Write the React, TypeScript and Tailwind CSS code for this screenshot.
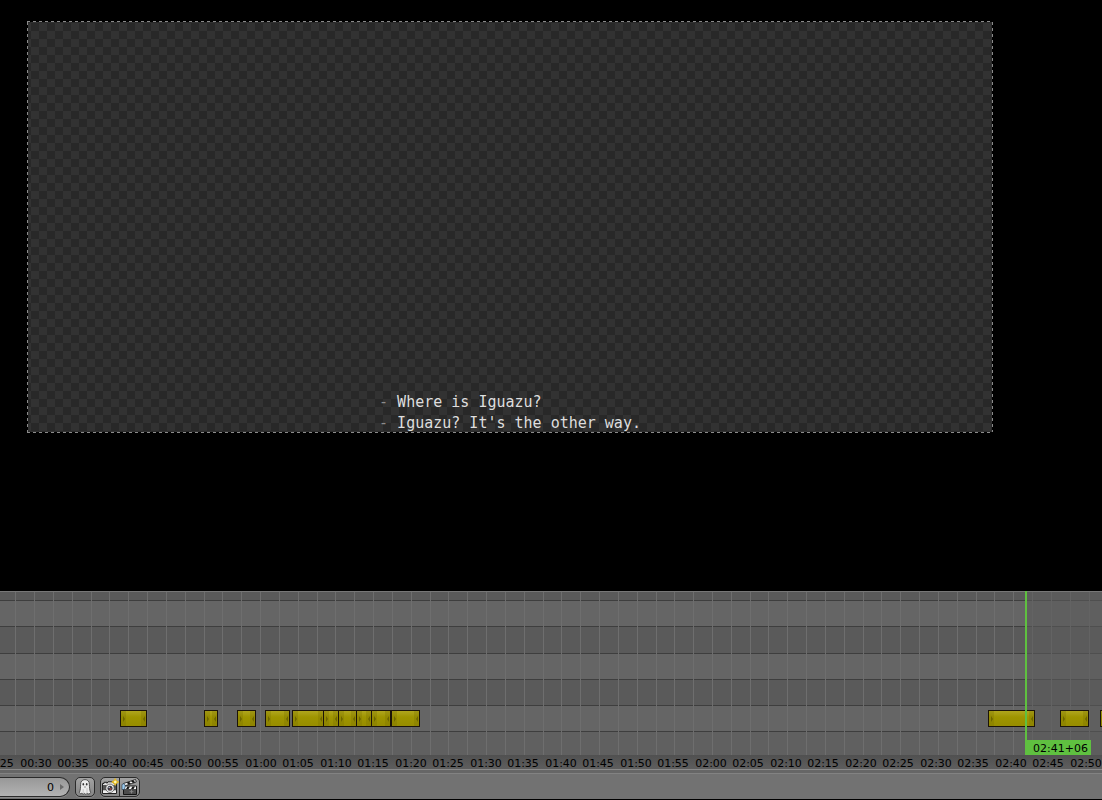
const LABEL_ORIGIN = 36;
const LABEL_STEP = 37.5;
const GRID_ORIGIN = 15.8;
const GRID_STEP = 18.83;

const LABELS = Array.from({ length: 30 }, (_, i) => {
  const seconds = 25 + i * 5;
  const mm = String(Math.floor(seconds / 60)).padStart(2, "0");
  const ss = String(seconds % 60).padStart(2, "0");
  return { text: `${mm}:${ss}`, x: Math.floor(LABEL_ORIGIN + (i - 1) * LABEL_STEP) };
});

const GRID_LINES = Array.from({ length: 100 }, (_, i) => Math.floor(GRID_ORIGIN + i * GRID_STEP));

const STRIPS = [
  { start: 120, end: 147 },
  { start: 204, end: 218 },
  { start: 237, end: 256 },
  { start: 265, end: 290 },
  { start: 292, end: 324 },
  { start: 323, end: 339 },
  { start: 338, end: 357 },
  { start: 356, end: 372 },
  { start: 371, end: 391 },
  { start: 391, end: 420 },
  { start: 988, end: 1035 },
  { start: 1060, end: 1089 },
  { start: 1100, end: 1130 },
];

function Strip({ start, end }: { start: number; end: number }) {
  return (
    <div
      className="absolute top-[119px] flex h-[17px] items-stretch justify-between border border-[#1c1408] bg-linear-to-b from-[#b0a61c] via-[#9f9500] via-40% to-[#978d00]"
      style={{ left: start, width: end - start }}
    >
      <span className="flex w-[5px] items-center justify-center bg-[#7a7100]/30">
        <svg className="h-[6px] w-[2px]" viewBox="0 0 2 6">
          <path d="M0 0 L2 3 L0 6 Z" fill="#6e6600" />
        </svg>
      </span>
      <span className="flex w-[5px] items-center justify-center bg-[#7a7100]/30">
        <svg className="h-[6px] w-[2px]" viewBox="0 0 2 6">
          <path d="M2 0 L0 3 L2 6 Z" fill="#6e6600" />
        </svg>
      </span>
    </div>
  );
}

function Preview() {
  return (
    <section aria-label="Preview" className="flex-1 bg-black pt-[21px] pr-[109px] pb-[158px] pl-[27px]">
      <div className="h-[412px] bg-[repeating-linear-gradient(90deg,#8a8a8a_0_3px,#000_3px_6px),repeating-linear-gradient(90deg,#8a8a8a_0_3px,#000_3px_6px),repeating-linear-gradient(0deg,#8a8a8a_0_3px,#000_3px_6px),repeating-linear-gradient(0deg,#8a8a8a_0_3px,#000_3px_6px)] bg-[size:100%_1px,100%_1px,1px_100%,1px_100%] bg-[position:top,bottom,left,right] bg-no-repeat p-px">
        <div className="flex h-full items-end justify-center bg-[repeating-conic-gradient(#323232_0_25%,#282828_0_50%)] bg-[size:16px_16px] bg-[position:3px_1px]">
          <p className="-mb-[2px] font-['DejaVu_Sans_Mono',monospace] text-[15px] leading-[21px] font-extralight whitespace-pre text-[#dedede]">
            <span className="text-[#8c8c8c]">-</span> Where is Iguazu?{"\n"}
            <span className="text-[#8c8c8c]">-</span> Iguazu? It's the other way.
          </p>
        </div>
      </div>
    </section>
  );
}

function Timeline() {
  return (
    <section aria-label="Sequence timeline" className="relative overflow-hidden">
      <div className="border-t border-[#777777]">
        <div className="h-[9px] border-b border-[#3e3e3e] bg-[#5a5a5a]" />
        <div className="h-[26px] border-b border-[#3e3e3e] bg-[#656565]" />
        <div className="h-[27px] border-b border-[#3e3e3e] bg-[#5a5a5a]" />
        <div className="h-[26px] border-b border-[#3e3e3e] bg-[#656565]" />
        <div className="h-[26px] border-b border-[#3e3e3e] bg-[#5a5a5a]" />
        <div className="h-[26px] border-b border-[#3e3e3e] bg-[#656565]" />
        <div className="h-[23px] bg-[#606060]" />
      </div>
      <div className="absolute inset-x-0 top-px bottom-[14px]">
        {GRID_LINES.map((x) => (
          <span key={x} className="absolute inset-y-0 w-px bg-[#6e6e6e]" style={{ left: x }} />
        ))}
      </div>
      <div className="absolute top-px right-0 bottom-[14px] left-[1027px] bg-[#5b5b5b]/60" />
      {STRIPS.map((s) => (
        <Strip key={s.start} start={s.start} end={s.end} />
      ))}
      <div className="absolute top-0 bottom-[14px] left-[1025px] flex items-end border-l-2 border-[#5fc040]">
        <span className="h-[15px] bg-[#5fc040] pr-[3px] pl-[6px] text-[11px] leading-[17px] text-black">02:41+06</span>
      </div>
      <div className="relative h-[14px] bg-linear-to-b from-[#505050] to-[#5e5e5e]">
        {LABELS.map((l) => (
          <span
            key={l.text}
            className="absolute top-0 -translate-x-1/2 text-[11px] leading-[17px] text-black"
            style={{ left: l.x }}
          >
            {l.text}
          </span>
        ))}
      </div>
    </section>
  );
}

function GhostIcon() {
  return (
    <svg className="h-4 w-4" viewBox="0 0 16 16" aria-hidden="true">
      <path
        d="M8 0.6 C5 0.6 3.6 2.6 3.6 5.5 C3.6 8.5 3.4 11 2.4 13.5 C3 15 4 15 4.8 14 C5.4 15.5 6.6 15.5 7.4 14.4 C8.3 15.6 9.4 15.5 10 14.4 C11 15.4 12.8 15.2 13.6 13.6 C12.6 11 12.4 8.5 12.4 5.5 C12.4 2.6 11 0.6 8 0.6 Z"
        fill="#ececec"
        stroke="#444"
        strokeWidth="0.9"
      />
      <path d="M10 9 V14 M6.2 10 V14" stroke="#c2c2c2" strokeWidth="0.9" />
      <ellipse cx="6.3" cy="5.3" rx="0.8" ry="1.2" fill="#333" />
      <ellipse cx="9.7" cy="5.3" rx="0.8" ry="1.2" fill="#333" />
      <path d="M7 8 H9" stroke="#777" strokeWidth="0.8" />
    </svg>
  );
}

function CameraIcon() {
  return (
    <svg className="h-[18px] w-[18px] shrink-0" viewBox="0 0 18 18" aria-hidden="true">
      <path d="M1.5 5.5 H3 V4.3 H6 V5.3 L7 3.8 H12 L13 5.5 H15.5 V15.5 H1.5 Z" fill="#dedede" stroke="#222" />
      <path d="M2 7 H15 V12.5 H2 Z" fill="#555" />
      <path d="M2 12.5 H15 V15 H2 Z" fill="#efefef" />
      <circle cx="9" cy="10.3" r="4.2" fill="#ececec" stroke="#333" strokeWidth="0.6" />
      <circle cx="9" cy="10.3" r="2.5" fill="#3a3a44" />
      <circle cx="9.6" cy="11" r="1.1" fill="#a04a40" />
      <circle cx="8.2" cy="9.4" r="0.7" fill="#c5d0e0" />
      <path d="M14.2 0.6 L15.4 2.8 L17.6 4 L15.4 5.2 L14.2 7.4 L13 5.2 L10.8 4 L13 2.8 Z" fill="#f6d13c" stroke="#e0b422" strokeWidth="1" />
      <circle cx="14.2" cy="4" r="1.2" fill="#fff6b8" />
    </svg>
  );
}

function ClapperIcon() {
  return (
    <svg className="h-[18px] w-[18px] shrink-0" viewBox="0 0 18 18" aria-hidden="true">
      <path d="M2.5 8 H15.5 V16.5 H2.5 Z" fill="#4c4c4c" stroke="#151515" />
      <path d="M2.5 5.5 L14.5 1.5 L15.3 4 L3.3 8 Z" fill="#f4f4f4" stroke="#151515" strokeWidth="0.8" />
      <path d="M5.5 4.5 L8 3.7 L10 5.8 L7.5 6.6 Z M10 3 L12.3 2.2 L14.2 4.3 L11.9 5.1 Z" fill="#151515" />
      <path d="M3.5 8.5 H15 V11 H3.5 Z" fill="#f4f4f4" />
      <path d="M6.5 8.5 H9 L7.5 11 H5 Z M11.5 8.5 H14 L12.5 11 H10 Z" fill="#151515" />
      <path d="M1 6.5 L3.2 5.5 L4.3 8 L3.5 11.5 H1 Z" fill="#9cccf0" stroke="#234" strokeWidth="0.6" />
      <path d="M10.5 11.8 V15.5 M8.6 13.7 H12.4" stroke="#858585" />
    </svg>
  );
}

function Toolbar() {
  return (
    <header className="border-b border-black bg-[#727272] text-[11px]">
      <div className="h-[4px] border-t border-[#8a8a8a] bg-[#666666]" />
      <div className="flex h-[26px] items-start border-t border-[#828282] pt-[3px]">
        <div className="flex h-5 w-[70px] items-center rounded-r-full border border-l-0 border-[#2b2b2b] bg-linear-to-b from-[#989898] to-[#b3b3b3] shadow-[0_1px_0_#8a8a8a]">
          <input
            type="text"
            aria-label="Frame"
            defaultValue="0"
            className="w-[54px] bg-transparent pt-px text-right text-[11px] leading-[16px] text-black outline-none"
          />
          <svg className="ml-[6px] h-[6px] w-[4px]" viewBox="0 0 4 6" aria-hidden="true">
            <path d="M0 0 L4 3 L0 6 Z" fill="#6a6a6a" />
          </svg>
        </div>
        <button
          type="button"
          aria-label="Ghost"
          className="ml-[5px] flex h-5 w-5 items-center justify-center rounded-[5px] border border-[#2b2b2b] bg-linear-to-b from-[#a2a2a2] to-[#868686] shadow-[0_1px_0_#8a8a8a]"
        >
          <GhostIcon />
        </button>
        <div className="ml-[5px] flex h-5 w-10 overflow-hidden rounded-[5px] border border-[#2b2b2b] bg-linear-to-b from-[#a2a2a2] to-[#868686] shadow-[0_1px_0_#8a8a8a]">
          <button type="button" aria-label="Render image" className="flex w-[19px] items-center justify-center border-r border-[#2b2b2b]">
            <CameraIcon />
          </button>
          <button type="button" aria-label="Render animation" className="flex w-[19px] items-center justify-center">
            <ClapperIcon />
          </button>
        </div>
      </div>
    </header>
  );
}

export default function App() {
  return (
    <main className="flex min-h-screen flex-col bg-black font-['DejaVu_Sans',sans-serif]">
      <Preview />
      <Timeline />
      <Toolbar />
    </main>
  );
}
